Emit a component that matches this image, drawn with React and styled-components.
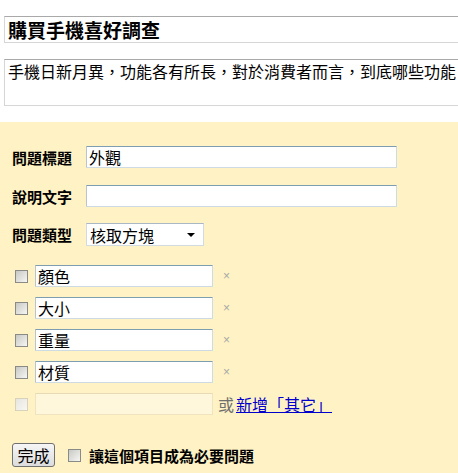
import React from 'react'
import styled, { createGlobalStyle } from 'styled-components'

const GlobalStyle = createGlobalStyle`
  html, body {
    margin: 0;
    padding: 0;
    background: #ffffff;
    overflow: hidden;
  }
  body {
    font-family: "Noto Sans CJK TC", "Liberation Sans", sans-serif;
    color: #000;
  }
`

const Page = styled.div`
  width: 458px;
  height: 473px;
  display: flex;
  flex-direction: column;
  overflow: hidden;
`

const Header = styled.div`
  padding: 16px 0 0 4px;
  height: 106px;
  box-sizing: border-box;
  display: flex;
  flex-direction: column;
  gap: 16px;
`

const TitleBox = styled.div`
  width: 520px;
  height: 27px;
  box-sizing: border-box;
  border: 1px solid #d6d6d6;
  border-top-color: #a9a9a9;
  padding: 0 3px;
  font-size: 19px;
  font-weight: 700;
  line-height: 25px;
  white-space: nowrap;
`

const DescBox = styled.div`
  width: 520px;
  height: 57px;
  box-sizing: border-box;
  border: 1px solid #d6d6d6;
  border-top-color: #a9a9a9;
  padding: 1px 3px;
  font-size: 16px;
  line-height: 20px;
  white-space: nowrap;
  overflow: hidden;
`

const Editor = styled.div`
  flex: 1;
  margin-top: 16px;
  background: #fff2c4;
  padding: 24px 0 0 12px;
  display: flex;
  flex-direction: column;
`

const FieldRow = styled.div`
  display: flex;
  align-items: center;
  height: ${p => p.$h || 22}px;
  margin-bottom: ${p => p.$mb || 0}px;
`

const Label = styled.span`
  width: 74px;
  font-size: 15px;
  font-weight: 700;
  white-space: nowrap;
`

const TextInput = styled.div`
  box-sizing: border-box;
  width: ${p => p.$w}px;
  height: 22px;
  background: ${p => (p.$disabled ? '#fff7dc' : '#ffffff')};
  border: 1px solid ${p => (p.$disabled ? '#efe3c0' : '#cfdbe3')};
  border-top-color: ${p => (p.$disabled ? '#e6d9b4' : '#7f9db0')};
  border-left-color: ${p => (p.$disabled ? '#efe3c0' : '#b9c4cc')};
  border-radius: 1px;
  padding: 0 2px;
  font-size: 16px;
  line-height: 20px;
  white-space: nowrap;
`

const Select = styled.div`
  box-sizing: border-box;
  width: 118px;
  height: 23px;
  background: #fff;
  border: 1px solid #d3dbe2;
  border-top-color: #a9b8c4;
  display: flex;
  align-items: center;
  justify-content: space-between;
  padding: 0 8px 0 3px;
  font-size: 16px;
`

const Arrow = styled.span`
  width: 0;
  height: 0;
  border-left: 4px solid transparent;
  border-right: 4px solid transparent;
  border-top: 4px solid #000;
`

const Options = styled.div`
  display: flex;
  flex-direction: column;
  gap: 10px;
  margin-top: 19px;
`

const OptionRow = styled.div`
  display: flex;
  align-items: center;
  height: 22px;
  padding-left: 3px;
`

const Check = styled.span`
  box-sizing: border-box;
  display: inline-block;
  width: 13px;
  height: 13px;
  border: 1px solid ${p => (p.$disabled ? '#d8d2bc' : '#8a8a86')};
  background: ${p =>
    p.$disabled
      ? 'linear-gradient(135deg, #e6e5de, #f8f7f2)'
      : 'linear-gradient(135deg, #c8c8c4, #f6f6f4)'};
  flex: none;
`

const OptionCheck = styled(Check)`
  margin-right: 7px;
`

const Remove = styled.span`
  margin-left: 10px;
  color: #a8a8a8;
  font-family: "Liberation Sans", sans-serif;
  font-size: 12px;
`

const Or = styled.span`
  margin-left: 5px;
  font-size: 16px;
  color: #6f6f6f;
`

const AddLink = styled.a`
  margin-left: 2px;
  font-size: 16px;
  color: #0000cc;
  text-decoration: underline;
`

const Footer = styled.div`
  display: flex;
  align-items: center;
  margin-top: 28px;
  padding-left: 0;
`

const DoneButton = styled.button`
  box-sizing: border-box;
  width: 43px;
  height: 24px;
  padding: 0;
  border: 1px solid #707070;
  border-radius: 3px;
  background: linear-gradient(#f6f6f6, #dcdcdc);
  font-family: "Noto Sans CJK TC", sans-serif;
  font-size: 16px;
  line-height: 20px;
  color: #000;
`

const RequiredCheck = styled(Check)`
  margin-left: 13px;
  margin-right: 8px;
`

const RequiredLabel = styled.span`
  font-size: 15px;
  font-weight: 700;
`

const options = ['顏色', '大小', '重量', '材質']

export default function App() {
  return (
    <Page>
      <GlobalStyle />
      <Header>
        <TitleBox>購買手機喜好調查</TitleBox>
        <DescBox>手機日新月異，功能各有所長，對於消費者而言，到底哪些功能</DescBox>
      </Header>
      <Editor>
        <FieldRow $mb={17}>
          <Label>問題標題</Label>
          <TextInput $w={311}>外觀</TextInput>
        </FieldRow>
        <FieldRow $mb={16}>
          <Label>說明文字</Label>
          <TextInput $w={311} />
        </FieldRow>
        <FieldRow $h={23}>
          <Label>問題類型</Label>
          <Select>
            核取方塊
            <Arrow />
          </Select>
        </FieldRow>
        <Options>
          {options.map(o => (
            <OptionRow key={o}>
              <OptionCheck />
              <TextInput $w={178}>{o}</TextInput>
              <Remove>×</Remove>
            </OptionRow>
          ))}
          <OptionRow>
            <OptionCheck $disabled />
            <TextInput $w={178} $disabled />
            <Or>或</Or>
            <AddLink href="#">新增「其它」</AddLink>
          </OptionRow>
        </Options>
        <Footer>
          <DoneButton>完成</DoneButton>
          <RequiredCheck />
          <RequiredLabel>讓這個項目成為必要問題</RequiredLabel>
        </Footer>
      </Editor>
    </Page>
  )
}
